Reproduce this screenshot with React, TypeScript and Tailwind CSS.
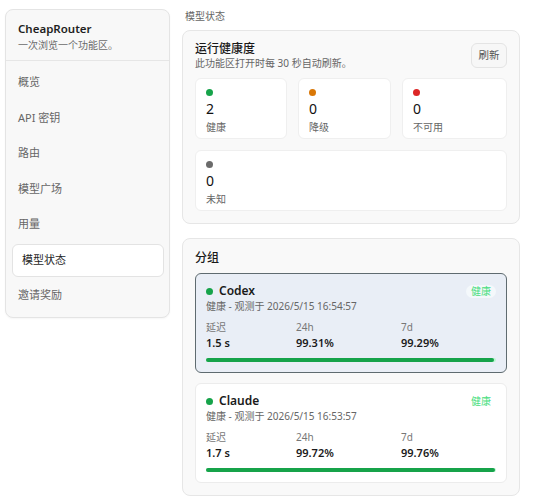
import React from 'react';

const navItems = ['概览', 'API 密钥', '路由', '模型广场', '用量', '模型状态', '邀请奖励'];

const stats = [
  { count: 2, label: '健康', dot: 'bg-[#16a34a]' },
  { count: 0, label: '降级', dot: 'bg-[#d97706]' },
  { count: 0, label: '不可用', dot: 'bg-[#dc2626]' },
];

type Group = {
  name: string;
  observed: string;
  latency: string;
  day: string;
  week: string;
  pct: number;
  active?: boolean;
};

const groups: Group[] = [
  { name: 'Codex', observed: '2026/5/15 16:54:57', latency: '1.5 s', day: '99.31%', week: '99.29%', pct: 99.31, active: true },
  { name: 'Claude', observed: '2026/5/15 16:53:57', latency: '1.7 s', day: '99.72%', week: '99.76%', pct: 99.72 },
];

function Sidebar() {
  return (
    <aside className="w-[165px] shrink-0 rounded-lg border border-[#e4e4e4] bg-[#f8f8f8] shadow-[0_1px_2px_rgba(0,0,0,0.04)]">
      <div className="border-b border-[#e6e6e6] px-[12px] pb-[8px] pt-[11px]">
        <div className="text-[11.5px] font-semibold leading-[15px] text-[#1f1f1f]">CheapRouter</div>
        <div className="mt-[2px] text-[10px] leading-[14px] text-[#6b6b6b]">一次浏览一个功能区。</div>
      </div>
      <nav className="flex flex-col gap-[2.5px] p-[5px] pl-[6px]">
        {navItems.map((item) =>
          item === '模型状态' ? (
            <div
              key={item}
              className="flex h-[33px] items-center rounded-md border border-[#e3e3e3] bg-white pl-[9px] text-[11px] text-[#1f1f1f]"
            >
              {item}
            </div>
          ) : (
            <div key={item} className="flex h-[33px] items-center pl-[6px] text-[11px] text-[#666]">
              {item}
            </div>
          )
        )}
      </nav>
    </aside>
  );
}

function StatCard({ count, label, dot }: { count: number; label: string; dot: string }) {
  return (
    <div className="h-[61px] rounded-md border border-[#efefef] bg-white px-[10px] pt-[10px]">
      <div className={`h-[7px] w-[7px] rounded-full ${dot}`} />
      <div className="mt-[4px] text-[14px] leading-[18px] text-[#111]">{count}</div>
      <div className="mt-[2px] text-[10px] leading-[14px] text-[#666]">{label}</div>
    </div>
  );
}

function GroupCard({ g }: { g: Group }) {
  return (
    <div
      className={
        g.active
          ? 'rounded-md border border-[#5f6b70] bg-[#e9eef6] px-[10px] pb-[10px] pt-[9px]'
          : 'rounded-md border border-[#ececec] bg-white px-[10px] pb-[10px] pt-[9px]'
      }
    >
      <div className="flex items-start justify-between">
        <div className="flex items-center gap-[6px]">
          <span className="h-[7px] w-[7px] rounded-full bg-[#16a34a]" />
          <span className="text-[12px] font-semibold leading-[16px] text-[#1a1a1a]">{g.name}</span>
        </div>
        <span
          className={
            g.active
              ? 'mt-[2px] rounded-full bg-[#f4f8fb] px-[5px] text-[10px] leading-[13px] text-[#4ade80]'
              : 'mt-[2px] px-[5px] text-[10px] leading-[13px] text-[#4ade80]'
          }
        >
          健康
        </span>
      </div>
      <div className="text-[10px] leading-[14px] text-[#666]">健康 - 观测于 {g.observed}</div>
      <div className="mt-[7px] grid grid-cols-[90px_105px_1fr]">
        <div>
          <div className="text-[10px] leading-[14px] text-[#777]">延迟</div>
          <div className="mt-[2px] text-[11px] font-semibold leading-[14px] text-[#1a1a1a]">{g.latency}</div>
        </div>
        <div>
          <div className="text-[10px] leading-[14px] text-[#777]">24h</div>
          <div className="mt-[2px] text-[11px] font-semibold leading-[14px] text-[#1a1a1a]">{g.day}</div>
        </div>
        <div>
          <div className="text-[10px] leading-[14px] text-[#777]">7d</div>
          <div className="mt-[2px] text-[11px] font-semibold leading-[14px] text-[#1a1a1a]">{g.week}</div>
        </div>
      </div>
      <div className="mt-[8px] h-[4px] rounded-full bg-[#bbf7d0]">
        <div className="h-full rounded-full bg-[#16a34a]" style={{ width: `${g.pct}%` }} />
      </div>
    </div>
  );
}

export default function App() {
  return (
    <div
      className="min-h-screen bg-white"
      style={{ fontFamily: '"Noto Sans", "Noto Sans CJK SC", sans-serif' }}
    >
      <div className="flex items-start gap-[12px] pl-[5px] pt-[9px]">
        <Sidebar />
        <main className="w-[338px]">
          <div className="pl-[3px] text-[10px] leading-[14px] text-[#666]">模型状态</div>

          <section className="mt-[7px] rounded-lg border border-[#e6e6e6] bg-[#f9f9f9] px-[12px] pb-[12px] pt-[10px]">
            <div className="flex items-start justify-between">
              <div>
                <div className="text-[12px] font-medium leading-[16px] text-[#1a1a1a]">运行健康度</div>
                <div className="text-[10px] leading-[12px] text-[#666]">此功能区打开时每 30 秒自动刷新。</div>
              </div>
              <button className="mt-[2px] h-[25px] w-[36px] rounded-md border border-[#e4e4e4] bg-[#f7f7f7] text-[10.5px] text-[#555]">
                刷新
              </button>
            </div>
            <div className="mt-[9px] grid grid-cols-[92px_93px_1fr] gap-[11px]">
              {stats.map((s) => (
                <StatCard key={s.label} {...s} />
              ))}
              <div className="col-span-3">
                <StatCard count={0} label="未知" dot="bg-[#6b6b6b]" />
              </div>
            </div>
          </section>

          <section className="mt-[14px] rounded-lg border border-[#e6e6e6] bg-[#f9f9f9] px-[12px] pb-[12px] pt-[11px]">
            <div className="text-[12px] font-medium leading-[16px] text-[#1a1a1a]">分组</div>
            <div className="mt-[7px] flex flex-col gap-[10px]">
              {groups.map((g) => (
                <GroupCard key={g.name} g={g} />
              ))}
            </div>
          </section>
        </main>
      </div>
    </div>
  );
}
